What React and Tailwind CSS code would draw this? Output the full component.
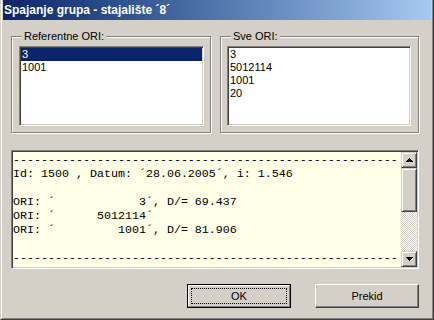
import React from "react";

const sans = { fontFamily: '"Liberation Sans", Arial, sans-serif' };
const mono = { fontFamily: '"Liberation Mono", "Courier New", monospace' };

function Raised({ className = "", children }) {
  return (
    <div
      className={
        "border border-t-[#d4d0c8] border-l-[#d4d0c8] border-r-[#404040] border-b-[#404040] bg-[#d4d0c8] shadow-[inset_1px_1px_0_#ffffff,inset_-1px_-1px_0_#808080] " +
        className
      }
    >
      {children}
    </div>
  );
}

function Arrow({ down }) {
  return (
    <svg width="7" height="4" viewBox="0 0 7 4" shapeRendering="crispEdges">
      {down ? (
        <g fill="#000">
          <rect x="0" y="0" width="7" height="1" />
          <rect x="1" y="1" width="5" height="1" />
          <rect x="2" y="2" width="3" height="1" />
          <rect x="3" y="3" width="1" height="1" />
        </g>
      ) : (
        <g fill="#000">
          <rect x="3" y="0" width="1" height="1" />
          <rect x="2" y="1" width="3" height="1" />
          <rect x="1" y="2" width="5" height="1" />
          <rect x="0" y="3" width="7" height="1" />
        </g>
      )}
    </svg>
  );
}

function GroupBox({ label, width, pl, listW, items, selected }) {
  return (
    <div
      className={`relative h-[97px] border border-[#808080] shadow-[inset_1px_1px_0_#ffffff,1px_1px_0_#ffffff] pt-[9px]`}
      style={{ width, paddingLeft: pl }}
    >
      <div className="absolute left-[10px] -top-[7px] px-[2px] bg-[#d4d0c8] text-[11px] leading-[13px] text-black" style={sans}>
        {label}
      </div>
      <div
        className="h-[80px] bg-white border border-t-[#808080] border-l-[#808080] border-r-white border-b-white shadow-[inset_1px_1px_0_#404040,inset_-1px_-1px_0_#d4d0c8] p-[1px]"
        style={{ width: listW }}
      >
        <div className="flex flex-col pt-0">
          {items.map((it, i) => (
            <div
              key={i}
              className={
                "h-[13px] leading-[13px] text-[11px] pl-[1px] " +
                (i === selected ? "bg-[#0a246a] text-white" : "text-black")
              }
              style={sans}
            >
              {it}
            </div>
          ))}
        </div>
      </div>
    </div>
  );
}

const dashes = "-".repeat(55);
const lines = [
  dashes,
  "Id: 1500 , Datum: \u00b428.06.2005\u00b4, i: 1.546",
  "",
  "ORI: \u00b4            3\u00b4, D/= 69.437",
  "ORI: \u00b4      5012114\u00b4",
  "ORI: \u00b4         1001\u00b4, D/= 81.906",
  "",
  dashes,
];

export default function App() {
  return (
    <div className="w-[434px] h-[320px] bg-[#d4d0c8] border border-t-0 border-l-[#d4d0c8] border-r-[#404040] border-b-[#404040] overflow-hidden">
      <div className="h-full border border-t-0 border-l-white border-r-[#808080] border-b-[#808080] px-px flex flex-col">
        <div
          className="h-[20px] shrink-0 bg-gradient-to-r from-[#0a246a] to-[#a6caf0] text-white font-bold text-[12px] pl-[1px] flex items-center"
          style={sans}
        >
          Spajanje grupa - stajalište ´8´
        </div>

        <div className="pl-[8px]">
          <div className="flex gap-[9px] mt-[16px]">
            <GroupBox label="Referentne ORI:" width="200px" pl="7px" listW="185px" items={["3", "1001"]} selected={0} />
            <GroupBox label="Sve ORI:" width="199px" pl="6px" listW="184px" items={["3", "5012114", "1001", "20"]} selected={-1} />
          </div>

          <div className="mt-[17px] w-[408px] h-[119px] bg-[#ffffe7] border border-t-[#808080] border-l-[#808080] border-r-white border-b-white shadow-[inset_1px_1px_0_#404040,inset_-1px_-1px_0_#d4d0c8] p-[1px] flex">
            <div className="flex-1 overflow-hidden pt-[1px] text-[11.67px] leading-[14px] text-black whitespace-pre" style={mono}>
              {lines.map((l, i) => (
                <div key={i} className="h-[14px]">
                  {l}
                </div>
              ))}
            </div>
            <div className="w-[16px] flex flex-col">
              <Raised className="h-[16px] flex items-center justify-center">
                <Arrow />
              </Raised>
              <Raised className="h-[44px]" />
              <div className="flex-1 bg-[repeating-conic-gradient(#d4d0c8_0_25%,#ffffff_0_50%)] bg-[length:2px_2px]" />
              <Raised className="h-[16px] flex items-center justify-center">
                <Arrow down />
              </Raised>
            </div>
          </div>

          <div className="mt-[15px] flex gap-[24px] pl-[176px]">
            <div className="w-[104px] h-[24px] border border-black">
              <div className="h-full border border-t-white border-l-white border-r-[#808080] border-b-[#808080] p-[2px]">
                <div className="h-full border border-dotted border-black flex items-center justify-center text-[11px] text-black" style={sans}>
                  OK
                </div>
              </div>
            </div>
            <div className="w-[104px] h-[24px] border border-t-white border-l-white border-r-[#404040] border-b-[#404040] shadow-[inset_-1px_-1px_0_#808080] flex items-center justify-center text-[11px] text-black" style={sans}>
              Prekid
            </div>
          </div>
        </div>
      </div>
    </div>
  );
}
